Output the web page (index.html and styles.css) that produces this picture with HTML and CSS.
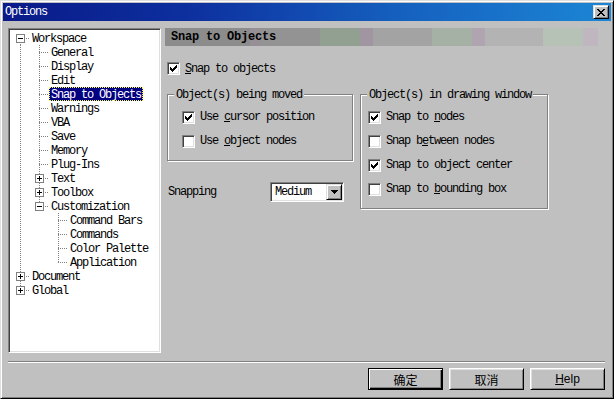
FILE: index.html
```html
<!DOCTYPE html>
<html>
<head>
<meta charset="utf-8">
<title>Options</title>
<link rel="stylesheet" href="styles.css">
</head>
<body>
<div class="window">
  <div class="titlebar">
    <span class="title">Options</span>
    <span class="close"><svg width="8" height="7" viewBox="0 0 8 7" shape-rendering="crispEdges"><path d="M0 0h2v1H0z M6 0h2v1H6z M1 1h2v1H1z M5 1h2v1H5z M2 2h4v1H2z M3 3h2v1H3z M2 4h4v1H2z M1 5h2v1H1z M5 5h2v1H5z M0 6h2v1H0z M6 6h2v1H6z"/></svg></span>
  </div>
  <div class="body">
    <div class="main">
      <div class="tree">
        <div class="row"><span class="c F"><span class="exp minus"></span></span><span class="lbl">Workspace</span></div>
        <div class="row"><span class="c I"></span><span class="c T"></span><span class="lbl">General</span></div>
        <div class="row"><span class="c I"></span><span class="c T"></span><span class="lbl">Display</span></div>
        <div class="row"><span class="c I"></span><span class="c T"></span><span class="lbl">Edit</span></div>
        <div class="row"><span class="c I"></span><span class="c T"></span><span class="lbl sel">Snap to Objects</span></div>
        <div class="row"><span class="c I"></span><span class="c T"></span><span class="lbl">Warnings</span></div>
        <div class="row"><span class="c I"></span><span class="c T"></span><span class="lbl">VBA</span></div>
        <div class="row"><span class="c I"></span><span class="c T"></span><span class="lbl">Save</span></div>
        <div class="row"><span class="c I"></span><span class="c T"></span><span class="lbl">Memory</span></div>
        <div class="row"><span class="c I"></span><span class="c T"></span><span class="lbl">Plug-Ins</span></div>
        <div class="row"><span class="c I"></span><span class="c T"><span class="exp plus"></span></span><span class="lbl">Text</span></div>
        <div class="row"><span class="c I"></span><span class="c T"><span class="exp plus"></span></span><span class="lbl">Toolbox</span></div>
        <div class="row"><span class="c I"></span><span class="c L"><span class="exp minus"></span></span><span class="lbl">Customization</span></div>
        <div class="row"><span class="c I"></span><span class="c"></span><span class="c T"></span><span class="lbl">Command Bars</span></div>
        <div class="row"><span class="c I"></span><span class="c"></span><span class="c T"></span><span class="lbl">Commands</span></div>
        <div class="row"><span class="c I"></span><span class="c"></span><span class="c T"></span><span class="lbl">Color Palette</span></div>
        <div class="row"><span class="c I"></span><span class="c"></span><span class="c L"></span><span class="lbl">Application</span></div>
        <div class="row"><span class="c T"><span class="exp plus"></span></span><span class="lbl">Document</span></div>
        <div class="row"><span class="c L"><span class="exp plus"></span></span><span class="lbl">Global</span></div>
      </div>
      <div class="panel">
        <div class="header">Snap to Objects</div>
        <div class="check topcheck"><span class="box"><svg class="tick" width="7" height="7" viewBox="0 0 7 7" shape-rendering="crispEdges"><path d="M0 2h1v3H0z M1 3h1v3H1z M2 4h1v3H2z M3 3h1v3H3z M4 2h1v3H4z M5 1h1v3H5z M6 0h1v3H6z"/></svg></span><span><u>S</u>nap to objects</span></div>
        <div class="groups">
          <div class="col">
            <div class="group g1">
              <div class="gtitle">Object(s) being moved</div>
              <div class="rows">
                <div class="check grow"><span class="box"><svg class="tick" width="7" height="7" viewBox="0 0 7 7" shape-rendering="crispEdges"><path d="M0 2h1v3H0z M1 3h1v3H1z M2 4h1v3H2z M3 3h1v3H3z M4 2h1v3H4z M5 1h1v3H5z M6 0h1v3H6z"/></svg></span><span>Use <u>c</u>ursor position</span></div>
                <div class="check grow"><span class="box"></span><span>Use <u>o</u>bject nodes</span></div>
              </div>
            </div>
            <div class="snapping">
              <span class="slabel">Snapping</span>
              <div class="combo"><span class="cval">Medium</span><span class="cbtn"><svg width="7" height="4" viewBox="0 0 7 4" shape-rendering="crispEdges"><path d="M0 0h7v1H0z M1 1h5v1H1z M2 2h3v1H2z M3 3h1v1H3z"/></svg></span></div>
            </div>
          </div>
          <div class="group g2">
            <div class="gtitle">Object(s) in drawing window</div>
            <div class="rows">
              <div class="check grow"><span class="box"><svg class="tick" width="7" height="7" viewBox="0 0 7 7" shape-rendering="crispEdges"><path d="M0 2h1v3H0z M1 3h1v3H1z M2 4h1v3H2z M3 3h1v3H3z M4 2h1v3H4z M5 1h1v3H5z M6 0h1v3H6z"/></svg></span><span>Snap to <u>n</u>odes</span></div>
              <div class="check grow"><span class="box"></span><span>Snap b<u>e</u>tween nodes</span></div>
              <div class="check grow"><span class="box"><svg class="tick" width="7" height="7" viewBox="0 0 7 7" shape-rendering="crispEdges"><path d="M0 2h1v3H0z M1 3h1v3H1z M2 4h1v3H2z M3 3h1v3H3z M4 2h1v3H4z M5 1h1v3H5z M6 0h1v3H6z"/></svg></span><span>Snap to object center</span></div>
              <div class="check grow"><span class="box"></span><span>Snap to <u>b</u>ounding box</span></div>
            </div>
          </div>
        </div>
      </div>
    </div>
    <div class="sep"></div>
    <div class="buttons">
      <button class="btn default">确定</button>
      <button class="btn">取消</button>
      <button class="btn"><u>H</u>elp</button>
    </div>
  </div>
</div>
</body>
</html>
```
FILE: styles.css
```css
html, body {
  margin: 0;
  padding: 0;
  background: #c0c0c0;
}

.window {
  width: 614px;
  height: 399px;
  box-sizing: border-box;
  background: #c0c0c0;
  border: 1px solid;
  border-color: #dfdfdf #000 #000 #dfdfdf;
  box-shadow: inset 1px 1px 0 #fff, inset -1px -1px 0 #808080;
  padding: 2px;
  display: flex;
  flex-direction: column;
  font-family: "Liberation Mono", "DejaVu Sans Mono", monospace;
  font-size: 12px;
  letter-spacing: -1.2px;
  color: #000;
}

/* ---------- title bar ---------- */
.titlebar {
  height: 18px;
  flex: none;
  display: flex;
  align-items: center;
  justify-content: space-between;
  background: linear-gradient(to right, #0a1a88 0%, #0d2f9e 30%, #1560bf 65%, #1c86d4 100%);
  color: #fff;
}
.title {
  padding-left: 2px;
  line-height: 18px;
}
.close {
  width: 16px;
  height: 14px;
  box-sizing: border-box;
  margin-right: 2px;
  background: #c0c0c0;
  border: 1px solid;
  border-color: #dfdfdf #000 #000 #dfdfdf;
  box-shadow: inset 1px 1px 0 #fff, inset -1px -1px 0 #808080;
  display: flex;
  align-items: center;
  justify-content: center;
}
.close svg { display: block; margin-left: -1px; }

/* ---------- body ---------- */
.body {
  flex: 1;
  display: flex;
  flex-direction: column;
  padding: 7px 6px 0 5px;
}
.main {
  display: flex;
  gap: 4px;
  height: 325px;
  flex: none;
}

/* ---------- tree ---------- */
.tree {
  width: 153px;
  flex: none;
  box-sizing: border-box;
  background: #fff;
  border: 1px solid;
  border-color: #808080 #fff #fff #808080;
  box-shadow: inset 1px 1px 0 #404040, inset -1px -1px 0 #dfdfdf;
  padding: 2px 0 0 2px;
}
.row {
  display: flex;
  height: 14px;
  line-height: 14px;
  white-space: nowrap;
}
.c {
  width: 19px;
  height: 14px;
  flex: none;
  display: flex;
  justify-content: center;
  align-items: flex-start;
  background-repeat: no-repeat;
}
.I {
  background-image: repeating-linear-gradient(to bottom, #808080 0 1px, transparent 1px 2px);
  background-size: 1px 14px;
  background-position: 9px 0;
}
.T {
  background-image:
    repeating-linear-gradient(to bottom, #808080 0 1px, transparent 1px 2px),
    repeating-linear-gradient(to right, #808080 0 1px, transparent 1px 2px);
  background-size: 1px 14px, 10px 1px;
  background-position: 9px 0, 9px 7px;
}
.L {
  background-image:
    repeating-linear-gradient(to bottom, #808080 0 1px, transparent 1px 2px),
    repeating-linear-gradient(to right, #808080 0 1px, transparent 1px 2px);
  background-size: 1px 7px, 10px 1px;
  background-position: 9px 0, 9px 7px;
}
.F {
  background-image:
    repeating-linear-gradient(to bottom, #808080 0 1px, transparent 1px 2px),
    repeating-linear-gradient(to right, #808080 0 1px, transparent 1px 2px);
  background-size: 1px 7px, 10px 1px;
  background-position: 9px 7px, 9px 7px;
}
.exp {
  width: 9px;
  height: 9px;
  box-sizing: border-box;
  margin-top: 3px;
  border: 1px solid #808080;
  background-color: #fff;
  background-repeat: no-repeat;
}
.exp.minus {
  background-image: linear-gradient(#000, #000);
  background-size: 5px 1px;
  background-position: 1px 3px;
}
.exp.plus {
  background-image: linear-gradient(#000, #000), linear-gradient(#000, #000);
  background-size: 5px 1px, 1px 5px;
  background-position: 1px 3px, 3px 1px;
}
.lbl {
  padding: 1px 2px 0;
  height: 13px;
  line-height: 14px;
}
.lbl.sel {
  background: #000080;
  color: #fff;
  outline: 1px dotted #ffff40;
  outline-offset: -1px;
}

/* ---------- right panel ---------- */
.panel {
  width: 433px;
  flex: none;
}
.header {
  height: 18px;
  line-height: 18px;
  padding-left: 6px;
  font-weight: bold;
  letter-spacing: -0.2px;
  background: linear-gradient(to right,
    #8c8c8c 0 85px, #968f96 85px 95px, #939393 95px 155px,
    #92a092 155px 195px, #a095a0 195px 208px, #a3a3a3 208px 267px,
    #a5b1a5 267px 307px, #afa4af 307px 320px, #b3b3b3 320px 378px,
    #b5c2b5 378px 418px, #c0b6c0 418px 433px);
}

.check {
  display: flex;
  align-items: center;
  gap: 5px;
  white-space: nowrap;
}
.box {
  width: 13px;
  height: 13px;
  flex: none;
  box-sizing: border-box;
  background: #fff;
  border: 1px solid;
  border-color: #808080 #fff #fff #808080;
  box-shadow: inset 1px 1px 0 #404040, inset -1px -1px 0 #dfdfdf;
  display: flex;
  align-items: center;
  justify-content: center;
}
.tick { display: block; }

.topcheck {
  margin: 16px 0 0 2px;
  height: 13px;
}

.groups {
  display: flex;
  align-items: flex-start;
  gap: 7px;
  margin: 19px 0 0 2px;
}
.group {
  box-sizing: border-box;
  border: 1px solid #808080;
  box-shadow: inset 1px 1px 0 #fff, 1px 1px 0 #fff;
}
.g1 { width: 186px; height: 67px; }
.g2 { width: 188px; height: 115px; }
.gtitle {
  margin: -6px 0 0 6px;
  padding: 0 2px;
  width: max-content;
  height: 12px;
  line-height: 12px;
  background: #c0c0c0;
  white-space: nowrap;
}
.rows { margin-top: 4px; }
.g1 .rows { padding-left: 14px; }
.g2 .rows { padding-left: 7px; }
.grow { height: 24px; }

.snapping {
  margin-top: 21px;
  display: flex;
  align-items: center;
}
.slabel {
  width: 102px;
  padding-left: 1px;
  white-space: nowrap;
}
.combo {
  width: 74px;
  height: 20px;
  box-sizing: border-box;
  background: #fff;
  border: 1px solid;
  border-color: #808080 #fff #fff #808080;
  box-shadow: inset 1px 1px 0 #404040, inset -1px -1px 0 #dfdfdf;
  padding: 1px;
  display: flex;
  align-items: center;
  justify-content: space-between;
}
.cval { padding-left: 3px; }
.cbtn {
  width: 16px;
  height: 16px;
  box-sizing: border-box;
  background: #c0c0c0;
  border: 1px solid;
  border-color: #dfdfdf #000 #000 #dfdfdf;
  box-shadow: inset 1px 1px 0 #fff, inset -1px -1px 0 #808080;
  display: flex;
  align-items: center;
  justify-content: center;
}
.cbtn svg { display: block; }

/* ---------- footer ---------- */
.sep {
  margin-top: 8px;
  height: 2px;
  box-sizing: border-box;
  border-top: 1px solid #808080;
  border-bottom: 1px solid #fff;
  flex: none;
}
.buttons {
  margin-top: 5px;
  display: flex;
  justify-content: flex-end;
  gap: 6px;
}
.btn {
  width: 75px;
  height: 22px;
  box-sizing: border-box;
  padding: 0;
  margin: 0;
  background: #c0c0c0;
  border: 1px solid;
  border-color: #fff #000 #000 #fff;
  box-shadow: inset 1px 1px 0 #dfdfdf, inset -1px -1px 0 #808080;
  font-family: "Liberation Sans", "Noto Sans CJK SC", sans-serif;
  font-size: 12px;
  letter-spacing: 0;
  color: #000;
}
.btn.default {
  border-color: #000;
  box-shadow: inset 1px 1px 0 #fff, inset -1px -1px 0 #000, inset -2px -2px 0 #808080;
}
```
